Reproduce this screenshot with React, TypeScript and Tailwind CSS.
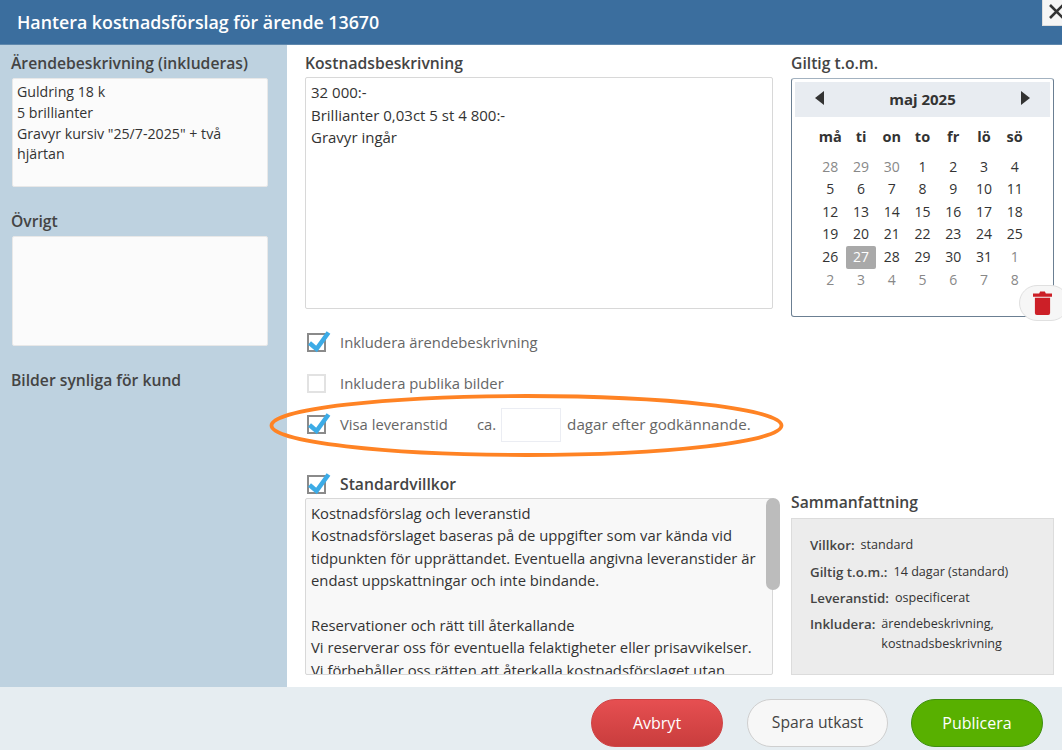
import React from 'react';

const font = { fontFamily: '"Open Sans", "Noto Sans", sans-serif' };

const weeks = [
  ['28', '29', '30', '1', '2', '3', '4'],
  ['5', '6', '7', '8', '9', '10', '11'],
  ['12', '13', '14', '15', '16', '17', '18'],
  ['19', '20', '21', '22', '23', '24', '25'],
  ['26', '27', '28', '29', '30', '31', '1'],
  ['2', '3', '4', '5', '6', '7', '8'],
];

const Check = ({ checked = true }: { checked?: boolean }) => (
  <span
    className={`relative block h-[19px] w-[19px] shrink-0 border-2 ${checked ? 'border-[#8a8a8a]' : 'border-[#e2e2e2]'}`}
  >
    {checked && (
      <svg className="absolute -left-[2px] -top-[6px] h-[25px] w-[25px]" viewBox="0 0 25 25">
        <path d="M2.5 14 L9.5 20 L21.5 3.5" fill="none" stroke="#3cabe6" strokeWidth="4.6" />
      </svg>
    )}
  </span>
);

const Calendar = () => (
  <div className="relative h-[239px] rounded-[3px] border border-[#6b7f92] border-t-[#a3b2c0] bg-white px-[3px] pt-[3px]">
    <div className="flex h-[35px] items-center justify-between bg-[#e8ecf1] pl-[20px] pr-[20px]">
      <span className="-mt-[4px] h-0 w-0 border-y-[7px] border-r-[9px] border-y-transparent border-r-[#333]" />
      <span className="text-[15px] font-bold text-[#333]">maj 2025</span>
      <span className="-mt-[4px] h-0 w-0 border-y-[7px] border-l-[9px] border-y-transparent border-l-[#333]" />
    </div>
    <div className="mx-[20px] mt-[9px] grid grid-cols-7 text-center text-[14px] leading-[22.6px] text-[#333]">
      {['må', 'ti', 'on', 'to', 'fr', 'lö', 'sö'].map((d) => (
        <div key={d} className="mb-[7px] text-[14.5px] font-bold">
          {d}
        </div>
      ))}
      {weeks.map((w, i) =>
        w.map((d, j) => {
          const muted = (i === 0 && j < 3) || (i === 4 && j === 6) || i === 5;
          const selected = i === 4 && j === 1;
          return (
            <div
              key={`${i}-${j}`}
              className={`rounded-[2px] ${selected ? 'bg-[#a9a9a9] text-white' : muted ? 'text-[#888]' : ''}`}
            >
              {d}
            </div>
          );
        }),
      )}
    </div>
  </div>
);

const SummaryRow = ({ label, value }: { label: string; value: React.ReactNode }) => (
  <div className="flex items-start gap-[6px] leading-[20px]">
    <span className="text-[13.3px] font-semibold text-[#444]">{label}</span>
    <span className="text-[12.6px] text-[#333]">{value}</span>
  </div>
);

export default function App() {
  return (
    <div className="relative flex h-[750px] w-[1062px] flex-col overflow-hidden bg-white text-[#333]" style={font}>
      <div className="flex h-[45px] shrink-0 items-center border-b border-[#5f88ad] bg-[#3b6e9e] pl-[17px] text-[17.8px] font-semibold text-white">
        Hantera kostnadsförslag för ärende 13670
      </div>
      <button className="absolute right-0 top-0 flex h-[26px] w-[20px] items-start justify-end border-b border-l border-[#ddd] bg-[#f5f5f5]">
        <svg width="13" height="22" viewBox="0 0 13 22">
          <path d="M1 5 L14 18 M14 5 L1 18" stroke="#333" strokeWidth="2.6" fill="none" />
        </svg>
      </button>

      <div className="flex h-[642px] shrink-0">
        <div className="w-[287px] shrink-0 bg-[#bed2e0] pl-[11px] pr-[18px] pt-[8px]">
          <div className="text-[15.7px] font-semibold leading-[20px] text-[#444]">Ärendebeskrivning (inkluderas)</div>
          <div className="ml-[1px] mt-[5px] h-[109px] w-[256px] rounded-[2px] border border-[#e8e8e8] bg-[#fbfbfb] px-[4px] py-[3px] text-[14.2px] leading-[20.8px] text-[#333]">
            Guldring 18 k
            <br />5 brillianter
            <br />
            Gravyr kursiv "25/7-2025" + två hjärtan
          </div>
          <div className="mt-[24px] text-[15.7px] font-semibold leading-[20px] text-[#444]">Övrigt</div>
          <div className="ml-[1px] mt-[5px] h-[110px] w-[256px] rounded-[2px] border border-[#e8e8e8] bg-[#fbfbfb]" />
          <div className="mt-[24px] text-[15.7px] font-semibold leading-[20px] text-[#444]">Bilder synliga för kund</div>
        </div>

        <div className="flex min-w-0 flex-1 flex-col pl-[18px] pr-[8px] pt-[8px]">
          <div className="flex gap-[18px]">
            <div className="w-[468px] shrink-0">
              <div className="text-[15.7px] font-semibold leading-[20px] text-[#444]">Kostnadsbeskrivning</div>
              <div className="mt-[4px] h-[232px] rounded-[2px] border border-[#d8d8d8] bg-white px-[5px] py-[3px] text-[15px] leading-[22.6px] text-[#333]">
                32 000:-
                <br />
                Brillianter 0,03ct 5 st 4 800:-
                <br />
                Gravyr ingår
              </div>
            </div>
            <div className="flex-1">
              <div className="text-[15.7px] font-semibold leading-[20px] text-[#444]">Giltig t.o.m.</div>
              <div className="mt-[5px]">
                <Calendar />
              </div>
            </div>
          </div>

          <div className="ml-[2px] mt-[16px] flex flex-col gap-[22px] text-[14.8px] leading-[19px] text-[#666]">
            <label className="flex h-[19px] items-center gap-[14px]">
              <Check />
              Inkludera ärendebeskrivning
            </label>
            <label className="flex h-[19px] items-center gap-[14px]">
              <Check checked={false} />
              Inkludera publika bilder
            </label>
            <div className="flex h-[19px] items-center">
              <Check />
              <span className="ml-[14px]">Visa leveranstid</span>
              <span className="ml-[29px]">ca.</span>
              <span className="ml-[5px] h-[34px] w-[60px] shrink-0 border border-[#ebedf3] bg-white" />
              <span className="ml-[6px] text-[15.2px]">dagar efter godkännande.</span>
            </div>
          </div>

          <div className="mt-[41px] flex gap-[18px]">
            <div className="w-[468px] shrink-0">
              <label className="ml-[2px] flex items-center gap-[14px] text-[15.7px] font-semibold leading-[19px] text-[#444]">
                <Check />
                Standardvillkor
              </label>
              <div className="relative mt-[4px] h-[177px] rounded-[2px] border border-[#d8d8d8] bg-[#f8f8f8]">
                <div className="h-full overflow-hidden whitespace-nowrap px-[5px] py-[3px] text-[14.8px] leading-[22.4px] text-[#333]">
                  Kostnadsförslag och leveranstid
                  <br />
                  Kostnadsförslaget baseras på de uppgifter som var kända vid
                  <br />
                  tidpunkten för upprättandet. Eventuella angivna leveranstider är
                  <br />
                  endast uppskattningar och inte bindande.
                  <br />
                  <br />
                  Reservationer och rätt till återkallande
                  <br />
                  Vi reserverar oss för eventuella felaktigheter eller prisavvikelser.
                  <br />
                  Vi förbehåller oss rätten att återkalla kostnadsförslaget utan
                </div>
                <div className="absolute -right-[8px] -top-px h-[92px] w-[14px] rounded-full bg-[#bcbcbc]" />
              </div>
            </div>
            <div className="flex flex-1 flex-col justify-end">
              <div className="text-[15.7px] font-semibold leading-[20px] text-[#444]">Sammanfattning</div>
              <div className="mt-[6px] h-[157px] border border-[#dcdcdc] bg-[#ececec] pl-[18px] pt-[16px]">
                <div className="flex flex-col gap-[6.5px]">
                  <SummaryRow label="Villkor:" value="standard" />
                  <SummaryRow label="Giltig t.o.m.:" value="14 dagar (standard)" />
                  <SummaryRow label="Leveranstid:" value="ospecificerat" />
                  <div className="-mt-[1px]">
                    <SummaryRow
                      label="Inkludera:"
                      value={
                        <>
                          ärendebeskrivning,
                          <br />
                          kostnadsbeskrivning
                        </>
                      }
                    />
                  </div>
                </div>
              </div>
            </div>
          </div>
        </div>
      </div>

      <div className="flex flex-1 items-start justify-end bg-[#e6edf1] pr-[19px] pt-[12px] text-[16px]">
        <button className="mr-[24px] h-[48px] w-[132px] rounded-full border border-[#cf4345] bg-gradient-to-b from-[#e64f51] to-[#c93d3d] text-white">
          Avbryt
        </button>
        <button className="mr-[23px] h-[48px] w-[141px] rounded-full border border-[#cfcfcf] bg-[#f7f7f7] text-[15.7px] text-[#444]">
          Spara utkast
        </button>
        <button className="h-[48px] w-[132px] rounded-full border border-[#3f8f10] bg-[#58b000] text-white">
          Publicera
        </button>
      </div>

      {/* delete date button, hangs over the calendar corner */}
      <button className="absolute left-[1019px] top-[285px] flex h-[36px] w-[50px] items-center rounded-full border border-[#e0e0e0] bg-[#f6f6f6] pl-[13px]">
        <svg width="19" height="24" viewBox="0 0 20 25">
          <path d="M0 2.5h6.5L7.5 0.5h5l1 2H20V6H0z" fill="#cc1f27" />
          <path d="M2 7h16v16a2 2 0 0 1-2 2H4a2 2 0 0 1-2-2z" fill="#cc1f27" />
        </svg>
      </button>

      {/* hand drawn highlight on the screenshot */}
      <svg className="pointer-events-none absolute left-[265px] top-[388px]" width="525" height="72" viewBox="0 0 525 72">
        <ellipse cx="261.5" cy="37.5" rx="255" ry="29.5" fill="none" stroke="#ff8324" strokeWidth="3.8" />
      </svg>
    </div>
  );
}
